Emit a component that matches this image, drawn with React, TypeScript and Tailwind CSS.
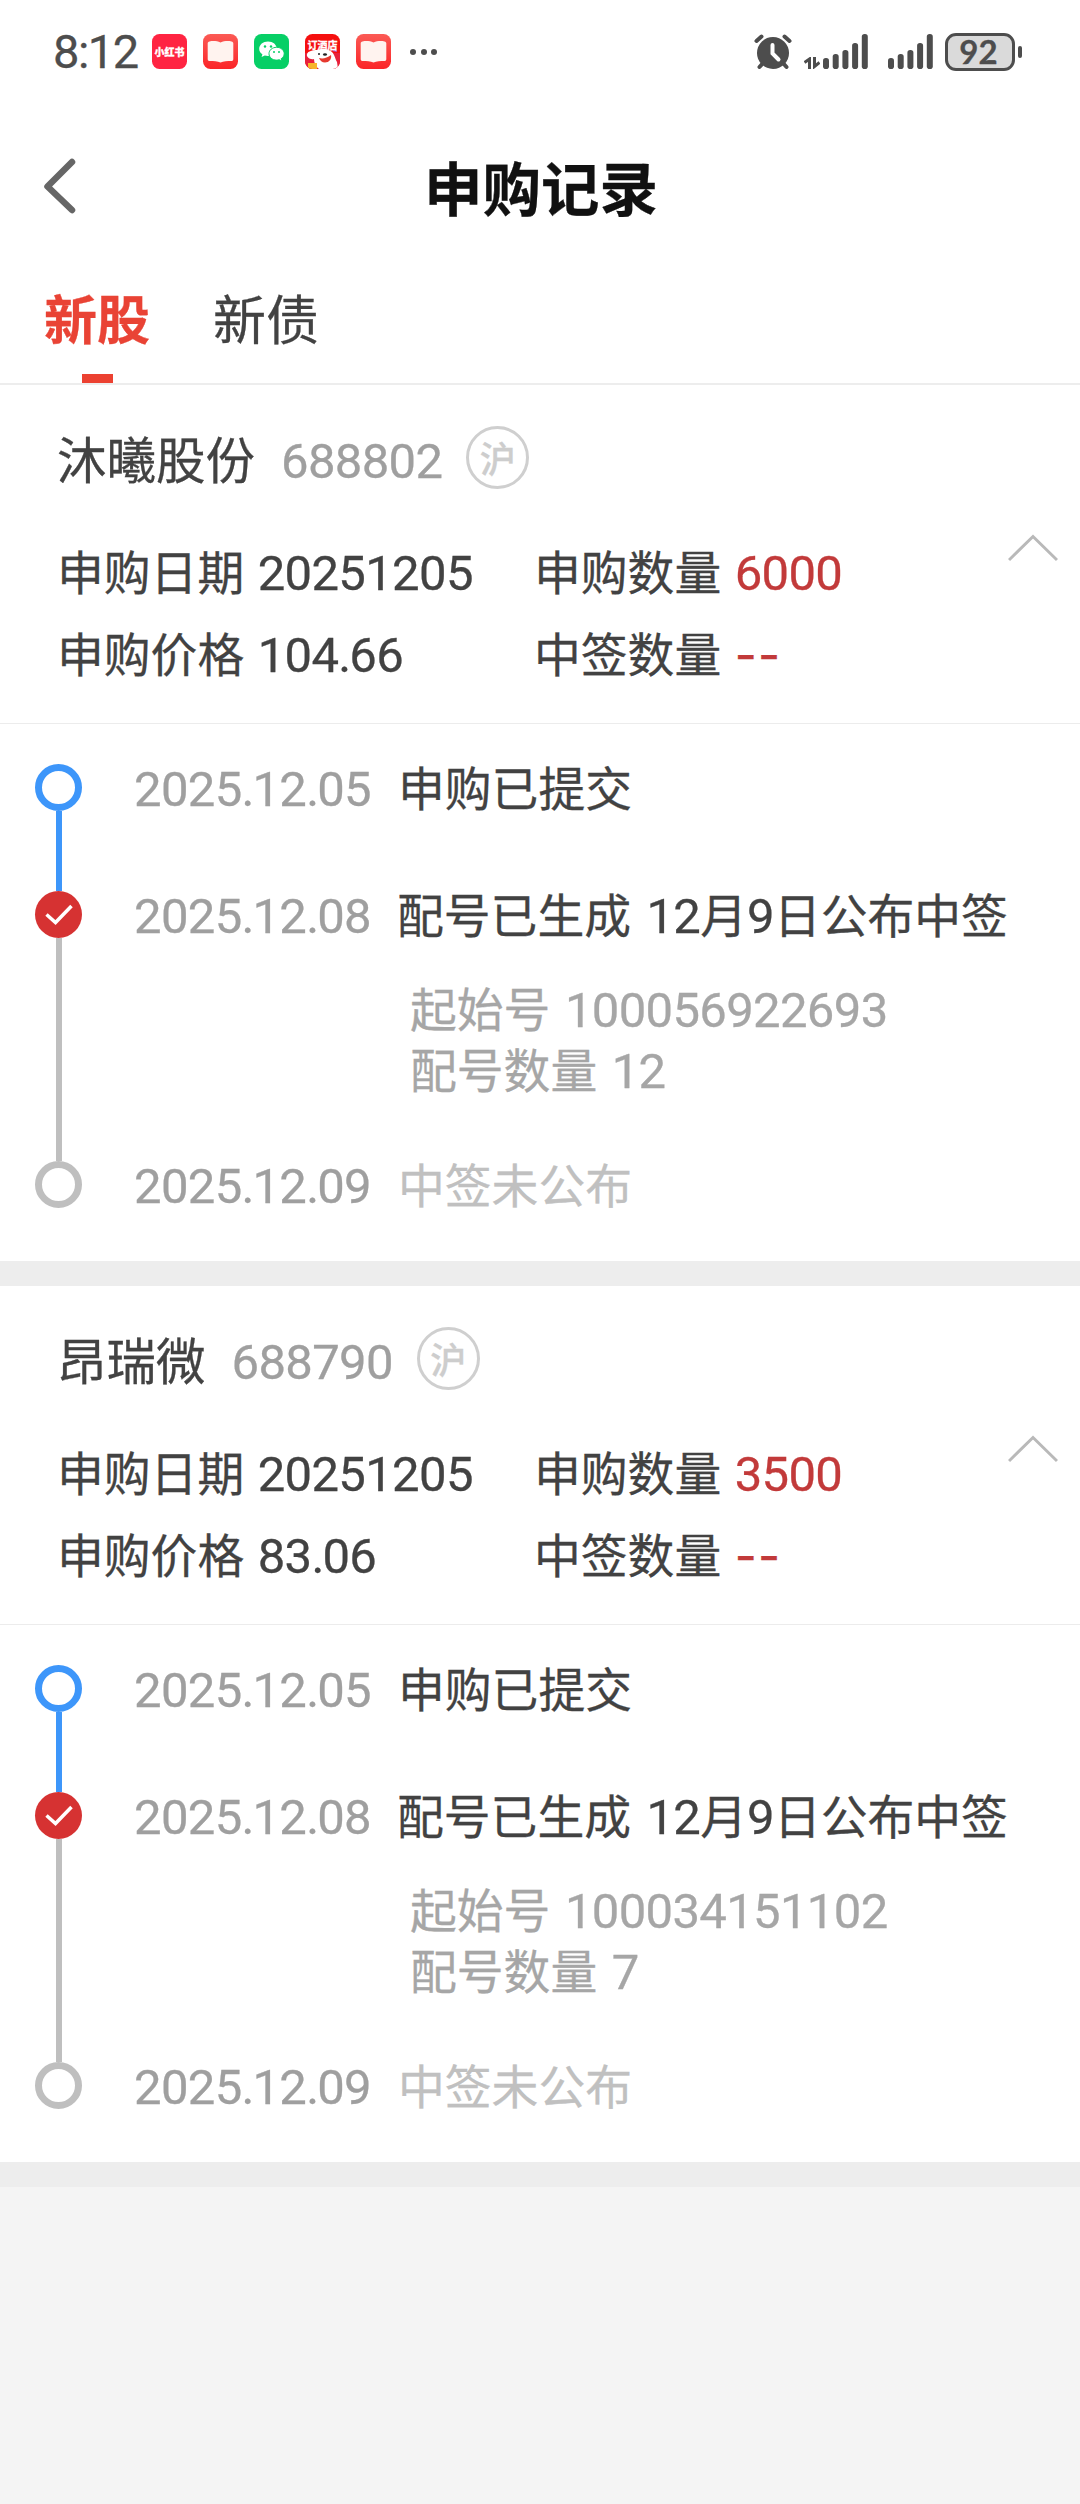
import { Fragment } from 'react';

interface Ipo {
  name: string;
  code: string;
  date: string;
  price: string;
  quantity: string;
  won: string;
  startNo: string;
  lots: string;
}

const records: Ipo[] = [
  {
    name: '沐曦股份',
    code: '688802',
    date: '20251205',
    price: '104.66',
    quantity: '6000',
    won: '--',
    startNo: '100056922693',
    lots: '12',
  },
  {
    name: '昂瑞微',
    code: '688790',
    date: '20251205',
    price: '83.06',
    quantity: '3500',
    won: '--',
    startNo: '100034151102',
    lots: '7',
  },
];

// Digits are set slightly larger than the Chinese text around them
function Txt({ children }: { children: string }) {
  return (
    <>
      {children.split(/([\d.]+|--)/).map((part, i) => {
        if (part === '--') {
          return <span key={i} className="font-['Inter'] text-[48px] leading-none tracking-[1.2px]">{part}</span>;
        }
        if (/^[\d.]+$/.test(part)) {
          return (
            <span key={i} className="font-['Roboto'] text-[49px] leading-none tracking-[-0.65px]">
              {part.split('.').map((digits, j) => (
                <Fragment key={j}>
                  {j > 0 && <span className="tracking-[-2px]">.</span>}
                  {digits}
                </Fragment>
              ))}
            </span>
          );
        }
        return <Fragment key={i}>{part}</Fragment>;
      })}
    </>
  );
}

function BookIcon() {
  return (
    <svg className="size-[35px]" viewBox="0 0 35 35">
      <defs>
        <linearGradient id="book" x1="0" y1="0" x2="0" y2="1">
          <stop offset="0" stopColor="#fb5a55" />
          <stop offset="1" stopColor="#fb2528" />
        </linearGradient>
      </defs>
      <rect width="35" height="35" rx="7.5" fill="url(#book)" />
      <path
        d="M6.500 7.500c3.500-.8 7.500-.5 11 1 3.500-1.500 7.500-1.800 11-1 1.200.3 1.800 1 1.800 2v15.500c0 1.400-.8 2-2 2-4 0-7.800.3-10.800 1.600-3-1.300-6.800-1.600-10.800-1.600-1.200 0-2-.6-2-2V9.500c0-1 .6-1.700 1.800-2z"
        fill="#fff3ef"
      />
    </svg>
  );
}

function WechatIcon() {
  return (
    <svg className="size-[35px]" viewBox="0 0 35 35">
      <rect width="35" height="35" rx="7.5" fill="#07cf66" />
      <path d="M14 7.500c-5 0-8.800 3.200-8.800 7.200 0 2.300 1.200 4.200 3.200 5.500l-.8 2.800 3.200-1.600c1 .3 2 .5 3.200.5 5 0 8.800-3.200 8.800-7.200S19 7.500 14 7.500z" fill="#fff" />
      <circle cx="11" cy="12.500" r="1.200" fill="#07cf66" />
      <circle cx="17" cy="12.500" r="1.200" fill="#07cf66" />
      <path
        d="M22.600 13.300c-4.300 0-7.600 2.800-7.600 6.400s3.300 6.400 7.600 6.400c.9 0 1.800-.1 2.600-.4l2.700 1.400-.7-2.400c1.800-1.200 3-2.900 3-5 0-3.600-3.400-6.400-7.600-6.400z"
        fill="#fff"
        stroke="#07cf66"
        strokeWidth="1"
      />
      <circle cx="20" cy="18" r="1" fill="#07cf66" />
      <circle cx="25" cy="18" r="1" fill="#07cf66" />
    </svg>
  );
}

function JdIcon() {
  return (
    <div className="relative size-[35px] overflow-hidden rounded-[7.5px] bg-[#f5100f]">
      <svg className="size-[35px]" viewBox="0 0 35 35">
        <path d="M0 19h35v16H0z" fill="#e8203a" />
        <path d="M2 20c1-3 6-4 10-4 5-2 12-1 15 2 3 3 3 7 5 10l1 7H14c-3-2-5-6-5-10-4 1-8-2-7-5z" fill="#fff" />
        <path d="M14 24c4 1 8 0 12-3 1 4-2 7.500-6 7.500-3 0-5-2-6-4.500z" fill="#e6392f" />
        <circle cx="14" cy="20" r="1" fill="#222" />
        <ellipse cx="20" cy="20.500" rx="2" ry="1.300" fill="#222" />
        <path d="M3 29h9v6H3z" fill="#f7b52c" />
        <path d="M27 17l4-3 1 4z" fill="#b65ad0" />
      </svg>
      <span className="absolute top-[4px] left-[2px] w-[31px] text-center text-[10px] leading-[14px] font-bold text-white">
        订酒店
      </span>
    </div>
  );
}

function AlarmIcon() {
  return (
    <svg className="h-[36px] w-[38px]" viewBox="0 0 38 36" stroke="#4d4d4d" strokeWidth="4" strokeLinecap="round" fill="none">
      <path d="M2.500 7l5-4.500M35.500 7l-5-4.500M9 29l-3.500 4M29 29l3.500 4" />
      <circle cx="19" cy="19" r="16" fill="#4d4d4d" stroke="none" />
      <path d="M18.500 11v8.500l6 6" stroke="#fff" strokeWidth="4" />
    </svg>
  );
}

function Bars() {
  const tops = [24, 20, 16, 9, 0];
  return (
    <svg className="h-[35px] w-[45px]" viewBox="0 0 45 35" fill="#4d4d4d">
      {tops.map((y, i) => (
        <rect key={y} x={i * 9.700} y={y} width="6" height={35 - y} rx="2.800" />
      ))}
    </svg>
  );
}

function StatusBar() {
  return (
    <div className="flex h-[103px] items-center pr-[58px] pl-[53px] text-[#4d4d4d]">
      <span className="w-[99px] font-['Roboto'] text-[47px] leading-none tracking-[-1.5px]">8:12</span>
      <div className="flex gap-4">
        <div className="flex size-[35px] items-center justify-center rounded-[7.5px] bg-[#ff2442] text-[10px] font-black text-white">
          小红书
        </div>
        <BookIcon />
        <WechatIcon />
        <JdIcon />
        <BookIcon />
      </div>
      <div className="ml-[19px] flex gap-[4.5px]">
        <i className="size-[6px] rounded-full bg-[#4d4d4d]" />
        <i className="size-[6px] rounded-full bg-[#4d4d4d]" />
        <i className="size-[6px] rounded-full bg-[#4d4d4d]" />
      </div>
      <div className="ml-auto flex items-center">
        <AlarmIcon />
        <svg className="mt-[23px] ml-[12px] h-[12px] w-[16px]" viewBox="0 0 16 12" fill="none" stroke="#4d4d4d" strokeWidth="3">
          <path d="M0.500 5.500L5.500 2V12M15.500 5.500L10.500 9.500V0" />
        </svg>
        <div className="ml-[3px]"><Bars /></div>
        <div className="ml-[20px]"><Bars /></div>
        <div className="ml-[12px] flex h-[38px] w-[70px] items-center justify-center rounded-[11px] border-[3px] border-[#4d4d4d] bg-[#dadada] pr-[3px] font-['Lato'] text-[33px] leading-none font-bold">
          92
        </div>
        <i className="ml-[3px] h-[12px] w-[4px] rounded-full bg-[#4d4d4d]" />
      </div>
    </div>
  );
}

function Dot({ state }: { state: 'start' | 'done' | 'pending' }) {
  if (state === 'done') {
    return (
      <div className="flex size-[47px] items-center justify-center rounded-full bg-[#d63232]">
        <svg className="h-[22px] w-[28px]" viewBox="0 0 28 22" fill="none" stroke="#fff" strokeWidth="3.500">
          <path d="M1.500 10.500L10.500 18.500L26.500 2" />
        </svg>
      </div>
    );
  }
  return (
    <div
      className={`size-[47px] rounded-full border-[7px] ${state === 'start' ? 'border-[#3d96fa]' : 'border-[#bfbfbf]'}`}
    />
  );
}

function Record({ item }: { item: Ipo }) {
  return (
    <section className="h-[901px] border-b-[25px] border-[#ededed] bg-white">
      <div className="relative h-[339px] border-b-[1.5px] border-[#ececec] pt-10 pl-[57px]">
        <div className="flex h-16 items-center">
          <span className="mt-[2px] text-[49.5px] leading-[66px]">{item.name}</span>
          <span className="mt-[2px] ml-[26px] text-[#9f9f9f]"><Txt>{item.code}</Txt></span>
          <span className="ml-[24px] flex size-[63px] items-center justify-center rounded-full border-[3px] border-[#cfcfcf] text-[36px] leading-none font-medium text-[#cdcdcd]">
            沪
          </span>
        </div>
        <div className="mt-10 grid grid-cols-[477px_1fr] leading-[82px]">
          <div><Txt>{`申购日期 ${item.date}`}</Txt></div>
          <div>申购数量 <span className="text-[#c23a3a]"><Txt>{item.quantity}</Txt></span></div>
          <div><Txt>{`申购价格 ${item.price}`}</Txt></div>
          <div>中签数量 <span className="text-[#c23a3a]"><Txt>{item.won}</Txt></span></div>
        </div>
        <svg className="absolute top-[149px] right-[22px] h-[28px] w-[50px]" viewBox="0 0 50 28" fill="none" stroke="#b9b9b9" strokeWidth="3">
          <path d="M1 26L25 2.500L49 26" />
        </svg>
      </div>

      <div className="pt-10 pl-[35px] leading-[43px] text-[#9f9f9f]">
        <div className="flex h-[127px]">
          <div className="flex flex-col items-center">
            <Dot state="start" />
            <div className="w-[6px] flex-1 bg-[#3d96fa]" />
          </div>
          <div className="ml-[52px] w-[263px]"><Txt>2025.12.05</Txt></div>
          <div className="pl-px text-[#424242]">申购已提交</div>
        </div>
        <div className="flex h-[270px]">
          <div className="flex flex-col items-center">
            <Dot state="done" />
            <div className="w-[6px] flex-1 bg-[#bfbfbf]" />
          </div>
          <div className="ml-[52px] w-[263px]"><Txt>2025.12.08</Txt></div>
          <div>
            <div className="text-[#424242] [word-spacing:5px]"><Txt>配号已生成 12月9日公布中签</Txt></div>
            <div className="mt-[35px] pl-[13px] leading-[61px] text-[#a6a6a6] [word-spacing:4px]">
              <div><Txt>{`起始号 ${item.startNo}`}</Txt></div>
              <div><Txt>{`配号数量 ${item.lots}`}</Txt></div>
            </div>
          </div>
        </div>
        <div className="flex h-[47px]">
          <Dot state="pending" />
          <div className="ml-[52px] w-[263px]"><Txt>2025.12.09</Txt></div>
          <div className="pl-px text-[#c0c0c0]">中签未公布</div>
        </div>
      </div>
    </section>
  );
}

export default function App() {
  return (
    <div className="h-[2504px] w-[1080px] overflow-hidden bg-[#f4f4f4] font-['Noto_Sans_CJK_SC',sans-serif] text-[46.8px] whitespace-nowrap text-[#424242] [word-spacing:3px] [-webkit-text-stroke:0.3px]">
      <header className="h-[385px] border-b-2 border-[#ededed] bg-white">
        <StatusBar />
        <div className="grid h-[165px] grid-cols-[1fr_auto_1fr] items-center pr-[40px] pl-[42px]">
          <svg className="h-[56px] w-[35px]" viewBox="0 0 35 56" fill="none" stroke="#666" strokeWidth="6.500" strokeLinecap="round" strokeLinejoin="round">
            <path d="M30 4L5.500 28.500L30 52" />
          </svg>
          <h1 className="text-[58.5px] leading-[58px] font-bold text-[#111]">申购记录</h1>
        </div>
        <nav className="flex h-[115px] gap-[63px] pl-[44px] text-[53px] leading-[98px]">
          <div className="flex flex-col items-center font-bold text-[#e94335]">
            新股
            <div className="mt-[8px] h-[9px] w-[31px] bg-[#ec4131]" />
          </div>
          <div>新债</div>
        </nav>
      </header>
      {records.map((item) => (
        <Record key={item.code} item={item} />
      ))}
    </div>
  );
}
